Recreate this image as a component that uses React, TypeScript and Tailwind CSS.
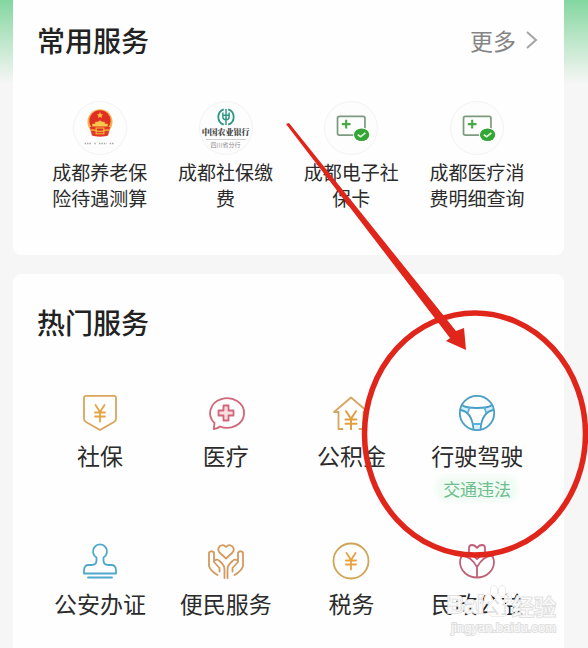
import type { ReactNode } from "react";

const sans = "font-['Noto_Sans_CJK_SC','Noto_Sans',sans-serif]";

function Icon({ color, children }: { color: string; children: ReactNode }) {
  return (
    <svg
      className={`size-9 overflow-visible ${color}`}
      viewBox="0 0 36 36"
      fill="none"
      stroke="currentColor"
      strokeWidth="1.8"
      strokeLinecap="round"
      strokeLinejoin="round"
      aria-hidden="true"
    >
      {children}
    </svg>
  );
}

function Emblem() {
  return (
    <svg className="size-full" viewBox="0 0 54 54" aria-hidden="true">
      <circle cx="27" cy="20.500" r="13" fill="#f3b04c" />
      <path d="M16.500 26h21l-2 8.500c-3 2-14 2-17 0z" fill="#e23a24" />
      <circle cx="27" cy="19.500" r="11" fill="#e02f22" />
      <path d="M27 10.500l1 2.200 2.400.2-1.800 1.500.6 2.300-2.200-1.200-2.200 1.200.6-2.300-1.800-1.500 2.400-.2z" fill="#f9c440" />
      <path d="M19 25.500h16v-3h-3v-2h-3l-2-1.500-2 1.500h-3v2h-3z" fill="#f8c64a" />
      <path d="M17 29.500c4-2 6 1 10 1s6-3 10-1M23 27h8v6h-8z" stroke="#f6bd3e" strokeWidth="1.200" fill="none" />
      <path d="M11 43h7m3 0h2m3 0h8m3 0h5" stroke="#a8a8a8" strokeWidth="1.500" strokeDasharray="1.500 1" />
    </svg>
  );
}

function BankLogo() {
  return (
    <span className="flex flex-col items-center whitespace-nowrap">
      <svg className="mt-1.5 size-[18px] shrink-0" viewBox="0 0 20 20" fill="none" stroke="#2b9684" strokeWidth="2" aria-hidden="true">
        <path d="M7.500 1.500a9 9 0 0 0 0 17M12.500 1.500a9 9 0 0 1 0 17" />
        <path d="M10 1v18M6.500 5v5q0 3 3.500 3t3.500-3V5M6.500 8h7" strokeWidth="1.600" />
      </svg>
      <span className="font-['Noto_Serif_CJK_SC','Noto_Sans_CJK_SC',serif] text-[8px] leading-[11px] font-black text-[#444]">
        中国农业银行
      </span>
      <span className="mt-0.5 h-px w-10 bg-[#cfcfcf]" />
      <span className="mt-px text-[6px] leading-[8px] text-[#888]">四川省分行</span>
    </span>
  );
}

function MedicalCard() {
  return (
    <svg className="size-full" viewBox="0 0 54 54" fill="none" aria-hidden="true">
      <rect x="13" y="15" width="28.500" height="19.500" rx="2" stroke="#7c9a7d" strokeWidth="1.800" />
      <path d="M22 18.500v9M17.500 23h9" stroke="#48a944" strokeWidth="2.200" />
      <ellipse cx="38" cy="34" rx="9" ry="7.500" fill="#fefefe" />
      <ellipse cx="38" cy="34" rx="8" ry="6.500" fill="#35a537" />
      <path d="M34 34l3 2 5-4" stroke="#d8f5ce" strokeWidth="1.800" />
    </svg>
  );
}

const yen = "M-4.500 -8L0 -1L4.500 -8M0 -1V8.500M-5 -.5H5M-5 3.500H5";

const common: { lines: string[]; art: ReactNode }[] = [
  { lines: ["成都养老保", "险待遇测算"], art: <Emblem /> },
  { lines: ["成都社保缴", "费"], art: <BankLogo /> },
  { lines: ["成都电子社", "保卡"], art: <MedicalCard /> },
  { lines: ["成都医疗消", "费明细查询"], art: <MedicalCard /> },
];

const hot: { name: string; tag?: string; icon: ReactNode }[] = [
  {
    name: "社保",
    icon: (
      <Icon color="text-[#d9a45c]">
        <path d="M4 .8h28q2 0 2 2v21q0 2-2 3.200L18 35 4 27q-2-1.200-2-3.200v-21q0-2 2-2z" />
        <path d={yen} transform="translate(18 18)" stroke="#e5a443" />
      </Icon>
    ),
  },
  {
    name: "医疗",
    icon: (
      <Icon color="text-[#cf6679]">
        <path d="M12 31.500A17 14.800 0 1 0 6.500 28l-.7 6q4-.4 6.200-2.500z" />
        <path d="M15.500 10.500h5v5h5v5h-5v5h-5v-5h-5v-5h5z" fill="#fbdde0" />
      </Icon>
    ),
  },
  {
    name: "公积金",
    icon: (
      <Icon color="text-[#d6a55e]">
        <path d="M9.500 34H5.500V17H1L18 2.500 35 17h-4.500v17h-4" />
        <path d={yen} transform="translate(18 25) scale(1.100)" stroke="#e0a040" />
      </Icon>
    ),
  },
  {
    name: "行驶驾驶",
    tag: "交通违法",
    icon: (
      <Icon color="text-[#4a9dc4]">
        <path d="M2 11l8 2.500-1.500 3.500L1 15zM34 11l-8 2.500 1.500 3.500L35 15zM15.500 28h5v7h-5z" fill="#d3f1fb" stroke="none" />
        <circle cx="18" cy="18" r="17.200" />
        <path d="M3 10q3.500 3 15 3t15-3M1.500 15q11.500 2 13 19M34.500 15q-11.500 2-13 19" />
        <path d="M10.500 12.800L8.800 17.500M25.500 12.800l1.700 4.700M14.500 29h7" stroke="#55b4de" />
      </Icon>
    ),
  },
  {
    name: "公安办证",
    icon: (
      <Icon color="text-[#4fa8cc]">
        <path d="M14.500 14.500a7 7 0 1 1 7 0v3q0 4.500 5 4.500h3q4 0 4.500 5v3.500H2V27q.5-5 4.500-5h3q5 0 5-4.500z" />
        <path d="M6 34.500h24" />
      </Icon>
    ),
  },
  {
    name: "便民服务",
    icon: (
      <Icon color="text-[#d39a60]">
        <path d="M18 15.500L11.500 9.500q-2.500-3 0-6 3.500-3 6.500.5 3-3.500 6.500-.5 2.500 3 0 6z" />
        <path d="M9.500 32q-7-4-8.500-9V9.500q2.500-2.500 5 0V19l5.500 6M6.500 17.500q3-2 5 .5 5 4 5 8.500V35M11.500 25v3.500" />
        <path d="M26.500 32q7-4 8.500-9V9.500q-2.500-2.500-5 0V19l-5.500 6M29.500 17.500q-3-2-5 .5-5 4-5 8.500V35M24.500 25v3.500" />
      </Icon>
    ),
  },
  {
    name: "税务",
    icon: (
      <Icon color="text-[#cfa558]">
        <circle cx="18" cy="18" r="17.500" />
        <path d={yen} transform="translate(18 18)" stroke="#e9a13f" />
      </Icon>
    ),
  },
  {
    name: "民政公益",
    icon: (
      <Icon color="text-[#bf6078]">
        <path d="M10 9V5q0-3 3-3 3 0 5 3 2-3 5-3 3 0 3 3v4" />
        <path d="M6 10q-5 4-5 9a17 15.500 0 0 0 34 0q0-5-5-9" />
        <path d="M18 34V24M2 13q9-1 16 11Q25 12 34 13M11 10l7 6 7-6" />
      </Icon>
    ),
  },
];

/* Hand-drawn marker around the driving entry; the origin is the top centre of its cell. */
function Marker() {
  return (
    <svg className="pointer-events-none absolute top-0 left-1/2 size-px overflow-visible" aria-hidden="true">
      <ellipse cx="-2" cy="39" rx="110.500" ry="121" fill="none" stroke="#e0251b" strokeWidth="5.500" />
      <path d="M-191-271L-188-272L-21-64L-13-67L-11-45L-31-54L-27-57Z" fill="#e0251b" />
    </svg>
  );
}

function Watermark() {
  return (
    <div
      className="pointer-events-none absolute right-8 bottom-3 z-20 text-white/80 [-webkit-text-stroke:2px_#e0e0e0] [paint-order:stroke_fill]"
      aria-hidden="true"
    >
      <div className="flex items-end justify-end text-2xl leading-[30px]">
        <span className="font-['Liberation_Sans',sans-serif] font-bold">Bai</span>
        <svg className="h-9 w-7" viewBox="0 0 28 36" fill="#fff" fillOpacity="0.85" stroke="#dedede" strokeWidth="1">
          <ellipse cx="4" cy="15" rx="3.500" ry="5" />
          <ellipse cx="10" cy="7" rx="3.500" ry="5.500" />
          <ellipse cx="18" cy="7" rx="3.500" ry="5.500" />
          <ellipse cx="24" cy="15" rx="3.500" ry="5" />
          <path d="M14 14q4 0 6 5 6 5 4 10-3 5-10 3-7 2-10-3-2-5 4-10 2-5 6-5z" />
        </svg>
        <span className="text-[22px]">经验</span>
      </div>
      <div className="text-right font-['Liberation_Sans',sans-serif] text-[13px] leading-4">
        jingyan.baidu.com
      </div>
    </div>
  );
}

export default function App() {
  return (
    <main className={`relative flex min-h-screen flex-col overflow-hidden bg-[#f6f6f6] bg-linear-to-b from-[#82d6a0] to-[#f6f6f6] to-[84px] pr-6 pl-[13px] text-[#2b2b2b] ${sans}`}>
      <section className="rounded-b-lg bg-[#fefefe] px-6 pt-5 pb-11">
        <header className="flex h-10 items-center justify-between">
          <h2 className="text-[28px] leading-10 font-medium text-[#222]">常用服务</h2>
          <button type="button" className="flex items-center gap-2 text-[23px] leading-10 text-[#858585]">
            更多
            <svg className="h-5 w-4" viewBox="0 0 16 20" fill="none" stroke="#a5a5a5" strokeWidth="2" aria-hidden="true">
              <path d="M3 2l9 8-9 8" />
            </svg>
          </button>
        </header>
        <div className="mt-[41px] grid grid-cols-4">
          {common.map((item) => (
            <button type="button" key={item.lines.join("")} className="flex flex-col items-center text-[19px] leading-[26px]">
              <span className="flex size-[54px] justify-center rounded-full border border-[#f3f3f3] bg-[#fdfdfd]">{item.art}</span>
              <span className="mt-1 flex flex-col">
                {item.lines.map((line) => (
                  <span key={line}>{line}</span>
                ))}
              </span>
            </button>
          ))}
        </div>
      </section>

      <section className="mt-[19px] flex-1 rounded-t-lg bg-[#fefefe] px-6 pt-7 pb-6">
        <h2 className="text-[28px] leading-10 font-medium text-[#222]">热门服务</h2>
        <div className="mt-[53px] grid grid-cols-4 gap-y-11">
          {hot.map((item) => (
            <button type="button" key={item.name} className={`relative flex flex-col items-center ${item.tag ? "z-10" : ""}`}>
              {item.icon}
              <span className="mt-2 text-[23px] leading-8 whitespace-nowrap">{item.name}</span>
              {item.tag && (
                <>
                  <span className="mt-2 rounded-md bg-[#effbf3] px-1 text-[17px] leading-5 text-[#6dbd8d] shadow-[0_0_6px_2px_#effbf3]">{item.tag}</span>
                  <Marker />
                </>
              )}
            </button>
          ))}
        </div>
      </section>
      <Watermark />
    </main>
  );
}
